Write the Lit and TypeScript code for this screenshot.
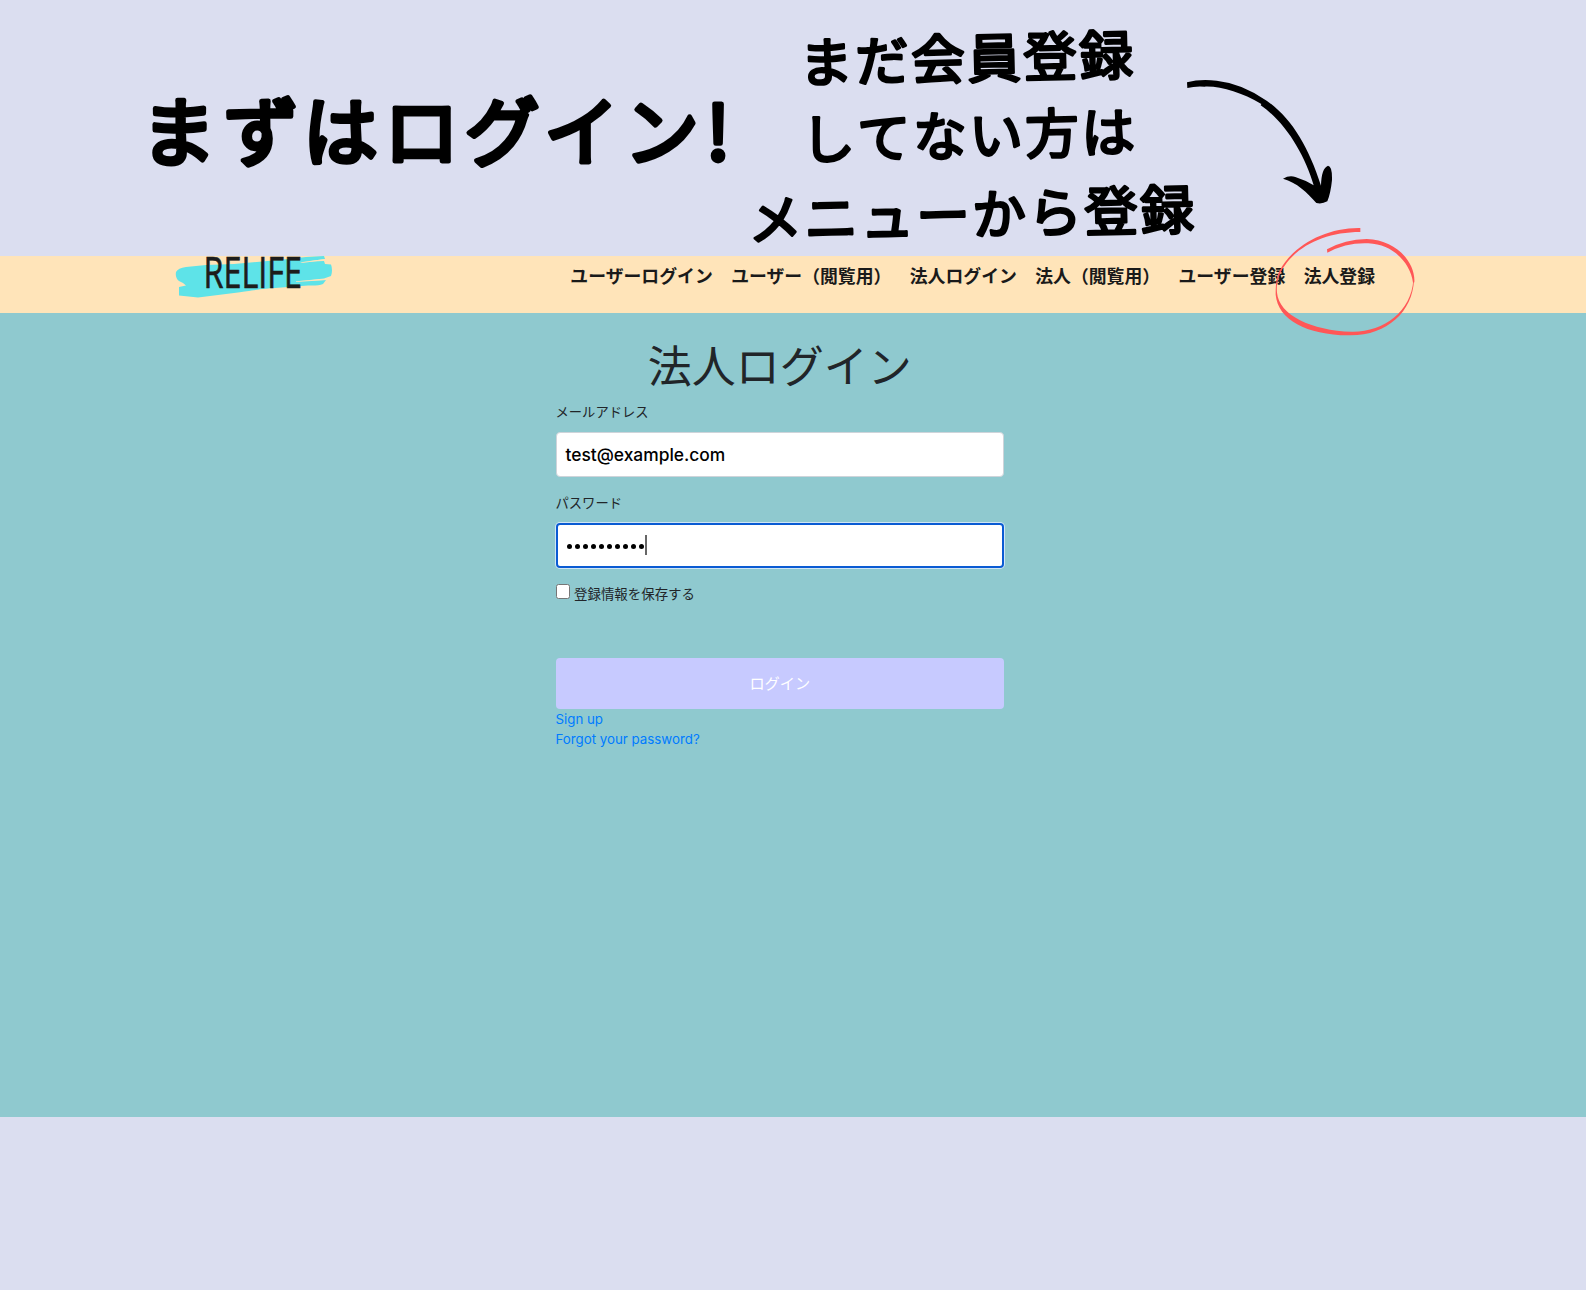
import { LitElement, html, svg, css } from "lit";
import { customElement } from "lit/decorators.js";

type Line = { text: string; xs: number[]; y: number; angle: number; cx: number };

const steps = (start: number, pitch: number, n: number) =>
  Array.from({ length: n }, (_, i) => +(start + pitch * i).toFixed(1));

const NOTES: Line[] = [
  { text: "まだ会員登録", xs: steps(826.5, 56, 6), y: 78.5, angle: -1.4, cx: 967 },
  { text: "してない方は", xs: steps(828.5, 56, 6), y: 155.5, angle: -1.4, cx: 969 },
  { text: "メニューから登録", xs: steps(775.5, 56, 8), y: 234.5, angle: -1.4, cx: 971 },
];

const MENU = [
  "ユーザーログイン",
  "ユーザー（閲覧用）",
  "法人ログイン",
  "法人（閲覧用）",
  "ユーザー登録",
  "法人登録",
];

@customElement("hero-banner")
class HeroBanner extends LitElement {
  static styles = css`
    :host { display: block; height: 256px; }
    svg { display: block; overflow: visible; }
    text {
      font-family: "Noto Sans CJK JP", sans-serif;
      text-anchor: middle;
      fill: #000;
      stroke: #000;
      stroke-linejoin: round;
    }
    .title { font-size: 75px; stroke-width: 4.8px; }
    .note { font-size: 53.5px; stroke-width: 2.8px; }
  `;
  render() {
    return html`<svg width="1586" height="256" viewBox="0 0 1586 256">
      <text class="title" x="178.500 261 340.500 421.5 502 581.500 661.500 718" y="160">まずはログイン!</text>
      ${NOTES.map(
        (l) => svg`<text class="note" x=${l.xs.join(" ")} y=${l.y}
          transform="rotate(${l.angle} ${l.cx} ${l.y})">${l.text}</text>`
      )}
    </svg>`;
  }
}

@customElement("site-header")
class SiteHeader extends LitElement {
  static styles = css`
    :host {
      display: flex;
      justify-content: space-between;
      align-items: flex-start;
      box-sizing: border-box;
      height: 57px;
      padding: 0 211px 0 174px;
      background: #ffe4b9;
    }
    .logo { display: block; overflow: visible; }
    .word { font: 44.5px "Open Sans", sans-serif; fill: #1d1d1b; stroke: #1d1d1b; stroke-width: 0.7px; }
    nav {
      display: flex;
      gap: 18.4px;
      padding-top: 6px;
      font: bold 17.85px/26px "Noto Sans CJK JP", sans-serif;
      color: #1a1a1a;
    }
    a { white-space: nowrap; }
  `;
  render() {
    return html`
      <svg class="logo" width="160" height="44" viewBox="0 0 160 44">
        <path fill="#5ee3e8" d="M2 16 Q4 12 12 11 L32 9 L60 8 L110 3.5 L132 1 L150 0 L151 3 L128 6 L150 5 L151 8 L157 8.500 Q159 14 157 20 L150 22.500 L126 25 L152 24 L149 28 Q144 30 134 29.500 L88 33 L64 36.500 L24 41.500 L5 39.500 L5 31 L12 29.500 Q10 27 5 25 Q1 22 2 16Z"/>
        <path fill="#ffe4b9" d="M126 6.500 L151 3 L151 4 L128 7Z M122 25.300 L153 22.800 L153 24 L122 26Z M64 36.500 L102 32 L88 33.900Z"/>
        <text class="word" x="29.500" y="32" textLength="98.500" lengthAdjust="spacingAndGlyphs">RELIFE</text>
      </svg>
      <nav>${MENU.map((m) => html`<a>${m}</a>`)}</nav>
    `;
  }
}

@customElement("login-form")
class LoginForm extends LitElement {
  static styles = css`
    :host {
      display: block;
      box-sizing: border-box;
      height: 804px;
      padding-top: 27px;
      background: #8fc9cf;
      font: 13.3px/20px Inter, "Noto Sans CJK JP", sans-serif;
      color: #212529;
    }
    form { display: flex; flex-direction: column; width: 448.5px; margin-left: 555.5px; }
    h1 { margin: 0; font-weight: 400; font-size: 44px; line-height: 54px; text-align: center; }
    label { display: block; height: 20px; }
    .mail-label { margin-top: 8px; }
    .field {
      display: flex;
      align-items: center;
      box-sizing: border-box;
      height: 45px;
      margin-top: 10px;
      padding: 0 9px;
      border: 1px solid #ced4da;
      border-radius: 4px;
      background: #fff;
      color: #000;
      font-size: 17.4px;
      font-weight: 500;
    }
    .pass-label { margin-top: 16px; }
    .focused { padding: 0 8px; border: 2px solid #0a5bd3; box-shadow: 0 0 0 1px #cfe6f5; }
    .dots { display: flex; gap: 3px; padding: 2px 0 0 1px; }
    .dot { width: 5.1px; height: 5.1px; border-radius: 50%; background: #000; }
    .caret { width: 2px; height: 20px; margin-left: 1px; margin-bottom: 1px; background: #666; }
    .remember { display: flex; gap: 4px; height: 20px; margin-top: 16px; font-size: 13.45px; }
    .check {
      box-sizing: border-box;
      width: 14.500px;
      height: 15px;
      border: 1px solid #767676;
      border-radius: 2.500px;
      background: #fff;
    }
    .submit {
      height: 51px;
      margin-top: 54px;
      border-radius: 4px;
      background: #c7caff;
      color: #fff;
      font-size: 15.2px;
      line-height: 51px;
      text-align: center;
    }
    .link { color: #007bff; }
  `;
  render() {
    return html`<form>
      <h1>法人ログイン</h1>
      <label class="mail-label">メールアドレス</label>
      <div class="field">test@example.com</div>
      <label class="pass-label">パスワード</label>
      <div class="field focused">
        <span class="dots">${Array.from({ length: 10 }, () => html`<i class="dot"></i>`)}</span>
        <span class="caret"></span>
      </div>
      <div class="remember"><span class="check"></span><span>登録情報を保存する</span></div>
      <div class="submit">ログイン</div>
      <a class="link">Sign up</a>
      <a class="link">Forgot your password?</a>
    </form>`;
  }
}

@customElement("app-root")
class AppRoot extends LitElement {
  static styles = css`
    :host {
      display: block;
      position: relative;
      width: 1586px;
      height: 1290px;
      overflow: hidden;
      background: #dbdef0;
    }
    .marks { position: absolute; left: 1170px; top: 60px; pointer-events: none; }
  `;
  render() {
    return html`
      <hero-banner></hero-banner>
      <site-header></site-header>
      <login-form></login-form>
      <svg class="marks" width="260" height="290" viewBox="0 0 780 870">
        <path d="M51 67 Q90 56 140 62 Q215 70 290 122 C365 175 415 260 453 377 Q454 325 474 317 Q487 318 486 360 Q482 400 472 424 Q456 433 439 429 C412 398 380 367 339 356 Q358 345 376 351 Q405 360 431 376 C405 285 345 185 272 136 L274 132 C215 98 155 78 104 80 Q75 78 52 84Z"/>
        <g fill="#ff5757">
          <path d="M571 504 C470 502 370 555 330 630 C318 652 317 680 317 704 C324 780 410 824 535 826 C650 829 728 755 732 660 L730 660 C724 755 640 817 545 815 C425 812 327 765 321 698 C318 670 327 640 344 617 C387 554 472 516 571 516Z"/>
          <path d="M471 568 Q525 538 590 537 C684 540 737 612 733 667 L729 668 C722 610 670 553 595 550 Q530 547 472 578Z"/>
        </g>
      </svg>
    `;
  }
}
